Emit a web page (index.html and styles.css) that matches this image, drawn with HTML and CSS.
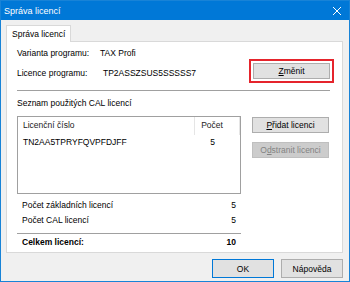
FILE: index.html
```html
<!DOCTYPE html>
<html lang="cs">
<head>
    <meta charset="UTF-8">
    <title>Správa licencí</title>
    <link rel="stylesheet" href="styles.css">
</head>
<body>
<div class="window">
    <div class="titlebar">
        <span class="title">Správa licencí</span>
        <svg class="close-icon" width="10" height="10" viewBox="0 0 10 10">
            <path d="M1 1 L9 9 M9 1 L1 9" stroke="#fff" stroke-width="1" fill="none"/>
        </svg>
    </div>
    <div class="dialog-body">
        <div class="tabs">
            <div class="tab">Správa licencí</div>
        </div>
        <div class="panel">
            <div class="info-row">
                <span class="label">Varianta programu:</span>
                <span class="value">TAX Profi</span>
            </div>
            <div class="info-row licence-row">
                <span class="label">Licence programu:</span>
                <span class="value code">TP2ASSZSUS5SSSSS7</span>
                <button class="btn highlighted"><u>Z</u>měnit</button>
            </div>
            <div class="separator"></div>
            <div class="group-title">Seznam použitých CAL licencí</div>
            <div class="cal">
                <div class="list">
                    <div class="list-head">
                        <span class="col-num">Licenční číslo</span>
                        <span class="col-count">Počet</span>
                    </div>
                    <div class="list-row">
                        <span class="col-num">TN2AA5TPRYFQVPFDJFF</span>
                        <span class="col-count">5</span>
                    </div>
                </div>
                <div class="side-buttons">
                    <button class="btn"><u>P</u>řidat licenci</button>
                    <button class="btn" disabled>O<u>d</u>stranit licenci</button>
                </div>
            </div>
            <div class="summary">
                <div class="sum-row"><span>Počet základních licencí</span><span>5</span></div>
                <div class="sum-row"><span>Počet CAL licencí</span><span>5</span></div>
                <div class="sum-row total"><span>Celkem licencí:</span><span>10</span></div>
            </div>
        </div>
        <div class="footer">
            <button class="btn default">OK</button>
            <button class="btn">Nápověda</button>
        </div>
    </div>
</div>
</body>
</html>
```

FILE: styles.css
```css
* {
    box-sizing: border-box;
}
body {
    margin: 0;
    font-family: 'Liberation Sans', Arial, sans-serif;
    font-size: 8.5px;
    color: #000;
}
.window {
    width: 350px;
    height: 282px;
    border: 1px solid #1883d7;
    background: #f0f0f0;
    display: flex;
    flex-direction: column;
}
.titlebar {
    height: 19px;
    background: #0078d7;
    color: #fff;
    display: flex;
    align-items: center;
    justify-content: space-between;
    padding: 0 7px 0 3px;
    font-size: 9px;
}
.dialog-body {
    flex: 1;
    padding: 5px 6px 3px 5px;
    display: flex;
    flex-direction: column;
}
.tabs {
    display: flex;
}
.tab {
    position: relative;
    z-index: 1;
    width: 65px;
    height: 17px;
    margin-bottom: -1px;
    padding: 3px 0 0 5px;
    background: #fff;
    border: 1px solid #d9d9d9;
    border-bottom: none;
}
.panel {
    height: 212px;
    background: #fff;
    border: 1px solid #d9d9d9;
    padding: 4px 12px 0 10px;
}
.info-row {
    display: flex;
    align-items: center;
    height: 14px;
}
.label {
    width: 83px;
}
.licence-row {
    height: 20px;
    margin-top: 1px;
}
.licence-row .label,
.licence-row .value {
    padding-top: 4px;
}
.code {
    padding-left: 3px;
}
.licence-row .btn {
    margin-left: auto;
}
.separator {
    height: 1px;
    background: #a0a0a0;
    margin-top: 9px;
}
.group-title {
    height: 12px;
    line-height: 12px;
    margin-top: 6px;
}
.cal {
    display: flex;
    gap: 11px;
    margin-top: 7px;
}
.list {
    width: 224px;
    height: 78px;
    border: 1px solid #a0a0a0;
}
.list-head,
.list-row {
    display: flex;
}
.list-head {
    height: 18px;
    line-height: 17px;
    color: #222;
}
.list-row {
    height: 17px;
    line-height: 15px;
}
.col-num {
    width: 177px;
    padding-left: 5px;
}
.list-head .col-num {
    border-right: 1px solid #e5e5e5;
}
.col-count {
    width: 45px;
    text-align: center;
    padding-right: 10px;
}
.list-head .col-count {
    border-right: 1px solid #e5e5e5;
}
.side-buttons {
    display: flex;
    flex-direction: column;
    gap: 9px;
    padding-top: 1px;
}
.btn {
    width: 77px;
    height: 16px;
    padding: 0;
    font-family: inherit;
    font-size: 8.5px;
    color: #000;
    background: #e1e1e1;
    border: 1px solid #adadad;
}
.btn:disabled {
    background: #cccccc;
    border-color: #bfbfbf;
    color: #838383;
}
.highlighted {
    outline: 2px solid #e5242c;
    outline-offset: 2px;
}
.summary {
    width: 224px;
    margin-top: 4px;
}
.sum-row {
    display: flex;
    justify-content: space-between;
    height: 15px;
    line-height: 15px;
    padding: 0 5px;
}
.sum-row.total {
    margin-top: 5px;
    padding-top: 1px;
    height: 19px;
    border-top: 1px solid #a0a0a0;
    font-weight: bold;
}
.footer {
    display: flex;
    justify-content: flex-end;
    gap: 7px;
    margin-top: 6px;
}
.footer .btn {
    width: 62px;
    height: 19px;
}
.btn.default {
    border-color: #0078d7;
}
```
